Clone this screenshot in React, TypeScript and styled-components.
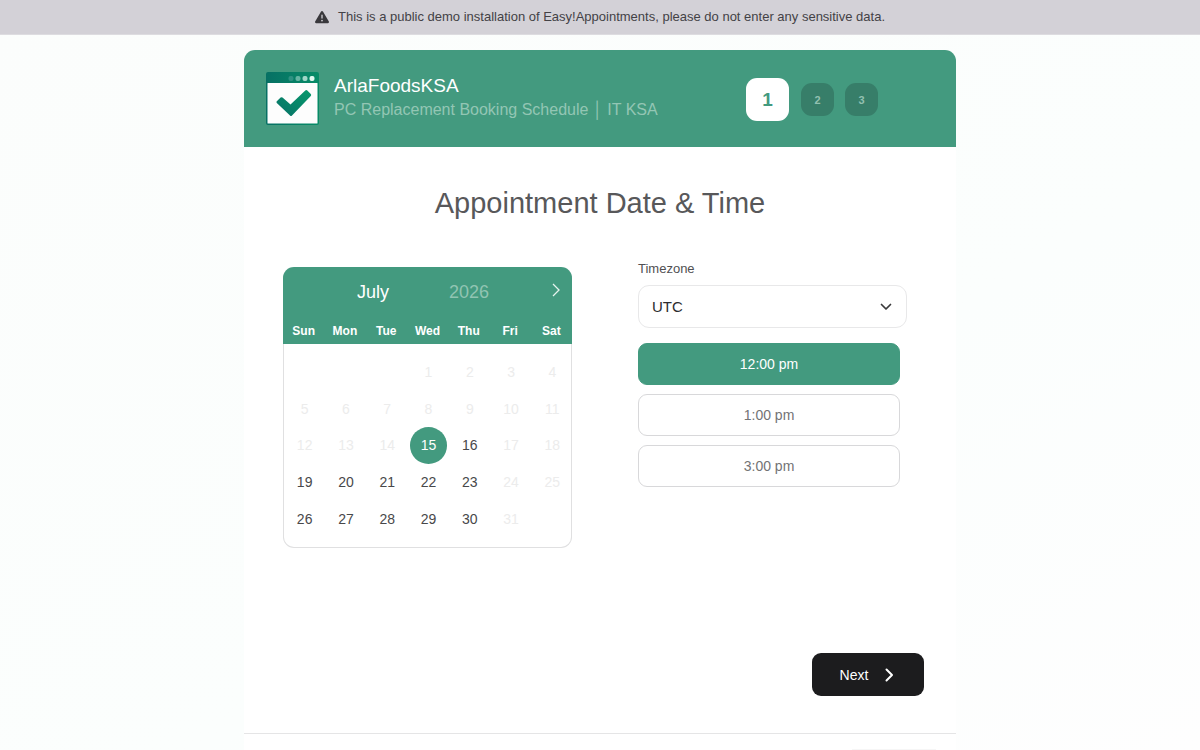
import React, { useState } from 'react';
import styled, { createGlobalStyle } from 'styled-components';

const GREEN = '#439a7f';

const GlobalStyle = createGlobalStyle`
  *, *::before, *::after { box-sizing: border-box; }
  body {
    margin: 0;
    background: #fbfefd;
    color: #58585a;
    font-family: "Liberation Sans", Arial, sans-serif;
    font-size: 13px;
    line-height: 20px;
  }
  button, select, input { font-family: inherit; }
`;

const Page = styled.div`
  min-height: 100vh;
  display: flex;
  flex-direction: column;
  align-items: center;
  background: linear-gradient(150deg, #fbfdfc 0%, #fbfefd 60%, #fefefe 100%);
`;

const Banner = styled.div`
  width: 100%;
  min-height: 35px;
  display: flex;
  align-items: center;
  justify-content: center;
  gap: 9px;
  background: #d3d1d7;
  border-bottom: 1px solid #dddce0;
  color: #434246;
`;

const Card = styled.main`
  width: 100%;
  max-width: 712px;
  flex: 1;
  margin-top: 15px;
  display: flex;
  flex-direction: column;
  background: #fff;
  border-radius: 11px 11px 0 0;
`;

const Header = styled.header`
  display: flex;
  align-items: center;
  justify-content: space-between;
  min-height: 97px;
  padding: 0 78px 0 22px;
  background: ${GREEN};
  border-radius: 11px 11px 0 0;
`;

const Brand = styled.div`
  display: flex;
  align-items: center;
  gap: 15px;
`;

const BrandText = styled.div`
  padding-bottom: 2px;
`;

const CompanyName = styled.div`
  color: #fff;
  font-size: 19px;
  line-height: 24px;
`;

const CompanyNote = styled.div`
  color: #93c6b4;
  font-size: 16px;
  line-height: 24px;
`;

const Steps = styled.div`
  display: flex;
  align-items: center;
  gap: 11px;
  padding-top: 2px;
`;

const Step = styled.div<{ $active?: boolean }>`
  width: ${p => (p.$active ? 43 : 33)}px;
  height: ${p => (p.$active ? 43 : 33)}px;
  margin-right: ${p => (p.$active ? 1 : 0)}px;
  border-radius: 11px;
  display: flex;
  align-items: center;
  justify-content: center;
  font-weight: bold;
  font-size: ${p => (p.$active ? 19 : 11)}px;
  color: ${p => (p.$active ? GREEN : '#92c0b0')};
  background: ${p => (p.$active ? '#fff' : '#377e69')};
`;

const Title = styled.h2`
  margin: 36px 0 43px;
  text-align: center;
  font-weight: normal;
  font-size: 29px;
  line-height: 40px;
  color: #58585a;
`;

const Columns = styled.div`
  display: grid;
  grid-template-columns: 1fr 1fr;
  align-items: start;
`;

const DateColumn = styled.div`
  padding: 1px 28px 0 39px;
`;

const TimeColumn = styled.div`
  padding: 0 49px 0 38px;
  display: flex;
  flex-direction: column;
`;

const Calendar = styled.div`
  border: 1px solid #e0e0e1;
  border-top: 0;
  border-radius: 11px;
`;

const CalendarHead = styled.div`
  margin: 0 -1px;
  padding-top: 9px;
  background: ${GREEN};
  border-radius: 11px 11px 0 0;
`;

const MonthRow = styled.div`
  display: grid;
  grid-template-columns: 72px 96px 1fr;
  align-items: center;
  height: 32px;
  padding: 0 10px 0 74px;
`;

const MonthSelect = styled.select`
  appearance: none;
  border: 0;
  padding: 0;
  background: transparent;
  color: #fff;
  font-size: 18px;
  line-height: 24px;
`;

const YearInput = styled.input`
  border: 0;
  padding: 0 0 0 20px;
  width: 96px;
  background: transparent;
  color: #91c4b2;
  font-size: 18px;
  line-height: 24px;
`;

const NextMonth = styled.button`
  justify-self: end;
  display: flex;
  border: 0;
  padding: 0 0 4px;
  background: transparent;
  color: #e6f3ee;
`;

const WeekRow = styled.div`
  display: grid;
  grid-template-columns: repeat(7, 1fr);
  padding: 13px 0 3px;
  text-align: center;
  color: #fff;
  font-size: 12px;
  font-weight: bold;
`;

const Days = styled.div`
  display: grid;
  grid-template-columns: repeat(7, 1fr);
  grid-template-rows: repeat(5, 1fr);
  justify-items: center;
  height: 203px;
  margin-right: -2px;
  padding: 10px 0;
`;

const Day = styled.button<{ $selected?: boolean; $first?: boolean }>`
  grid-column-start: ${p => (p.$first ? 4 : 'auto')};
  width: 37px;
  height: 100%;
  border: 0;
  border-radius: 50%;
  padding: 0;
  font-size: 14px;
  background: ${p => (p.$selected ? GREEN : 'transparent')};
  color: ${p => (p.$selected ? '#fff' : '#48484a')};
  &:disabled { color: #ececec; }
`;

const Label = styled.label`
  line-height: 18px;
  margin-top: -6px;
  color: #505052;
`;

const SelectBox = styled.div`
  position: relative;
  margin: 7px 0 15px;
  svg {
    position: absolute;
    right: 15px;
    top: 15px;
    pointer-events: none;
  }
`;

const TimezoneSelect = styled.select`
  appearance: none;
  width: 100%;
  height: 43px;
  padding: 0 13px;
  border: 1px solid #e8e8e9;
  border-radius: 11px;
  background: #fff;
  color: #2c2c2e;
  font-size: 15px;
`;

const Slots = styled.div`
  display: flex;
  flex-direction: column;
  gap: 9px;
  padding-right: 7px;
`;

const Slot = styled.button<{ $selected: boolean }>`
  height: 42px;
  border: 1px solid ${p => (p.$selected ? GREEN : '#d8d8da')};
  border-radius: 9px;
  background: ${p => (p.$selected ? GREEN : '#fff')};
  color: ${p => (p.$selected ? '#fff' : '#737375')};
  font-size: 14px;
`;

const Actions = styled.div`
  display: flex;
  justify-content: flex-end;
  margin-top: auto;
  padding: 24px 32px 37px;
`;

const NextButton = styled.button`
  display: flex;
  align-items: center;
  justify-content: center;
  gap: 14px;
  width: 112px;
  height: 43px;
  border: 0;
  border-radius: 9px;
  background: #1c1c1e;
  color: #fff;
  font-size: 14px;
`;

const Footer = styled.footer`
  display: flex;
  justify-content: flex-end;
  align-items: flex-end;
  height: 17px;
  padding-right: 20px;
  border-top: 1px solid #e5e5e6;
`;

const FooterEdge = styled.div`
  width: 84px;
  border-top: 1px solid #f6f6f6;
`;

const WarningIcon = () => (
  <svg width="14" height="14" viewBox="0 0 512 512" aria-hidden="true">
    <path
      fill="#39383c"
      d="M256 32c14.200 0 27.300 7.500 34.500 19.800l216 368c7.300 12.400 7.300 27.700.2 40.100S486.300 480 472 480H40c-14.300 0-27.600-7.700-34.700-20.100s-7-27.800.2-40.100l216-368C228.700 39.500 241.800 32 256 32zm0 128c-13.300 0-24 10.700-24 24v112c0 13.300 10.700 24 24 24s24-10.700 24-24V184c0-13.300-10.700-24-24-24zm32 224a32 32 0 1 0-64 0 32 32 0 1 0 64 0z"
    />
  </svg>
);

const Logo = () => (
  <svg width="53" height="53" viewBox="0 0 53 53" aria-hidden="true">
    <defs>
      <linearGradient id="bar" x1="0" y1="0" x2="1" y2="0">
        <stop offset="0" stopColor="#077064" />
        <stop offset="1" stopColor="#078c67" />
      </linearGradient>
      <linearGradient id="tick" x1="0" y1="1" x2="1" y2="0">
        <stop offset="0" stopColor="#087167" />
        <stop offset="1" stopColor="#07996c" />
      </linearGradient>
    </defs>
    <rect width="53" height="53" rx="2" fill="url(#bar)" />
    <rect x="1.500" y="11" width="50" height="40.500" rx="0.500" fill="#fdfdfd" />
    <rect x="22.500" y="4" width="5" height="5" rx="2" fill="#2f9182" />
    <rect x="29.500" y="4" width="5" height="5" rx="2" fill="#65b5a3" />
    <rect x="36.500" y="4" width="5" height="5" rx="2" fill="#a0d6c7" />
    <rect x="43.500" y="4" width="5" height="5" rx="2" fill="#dff8ef" />
    <path
      d="M10.800 29.200 L14.600 25.600 Q15.500 24.800 16.500 25.600 L24.500 32.500 L39.300 18.500 Q40.300 17.700 41.300 18.500 L44.800 22 Q45.600 23 44.800 24 L26 43.500 Q25 44.500 24 43.500 L10.800 31 Q10 30 10.800 29.200 Z"
      fill="url(#tick)"
    />
  </svg>
);

const WEEKDAYS = ['Sun', 'Mon', 'Tue', 'Wed', 'Thu', 'Fri', 'Sat'];
const DAYS = Array.from({ length: 31 }, (_, i) => i + 1);
const TIMES = ['12:00 pm', '1:00 pm', '3:00 pm'];
const isOpen = (d: number) => (d >= 15 && d <= 16) || (d >= 19 && d <= 23) || (d >= 26 && d <= 30);

export default function App() {
  const [day, setDay] = useState(15);
  const [time, setTime] = useState(TIMES[0]);

  return (
    <>
      <GlobalStyle />
      <Page>
        <Banner>
          <WarningIcon />
          <span>This is a public demo installation of Easy!Appointments, please do not enter any sensitive data.</span>
        </Banner>
        <Card>
          <Header>
            <Brand>
              <Logo />
              <BrandText>
                <CompanyName>ArlaFoodsKSA</CompanyName>
                <CompanyNote>PC Replacement Booking Schedule │ IT KSA</CompanyNote>
              </BrandText>
            </Brand>
            <Steps>
              <Step $active>1</Step>
              <Step>2</Step>
              <Step>3</Step>
            </Steps>
          </Header>
          <Title>Appointment Date &amp; Time</Title>
          <Columns>
            <DateColumn>
              <Calendar>
                <CalendarHead>
                  <MonthRow>
                    <MonthSelect aria-label="Month"><option>July</option></MonthSelect>
                    <YearInput aria-label="Year" defaultValue="2026" />
                    <NextMonth type="button" aria-label="Next month">
                      <svg width="12" height="14" viewBox="0 0 12 14" fill="none" stroke="currentColor" strokeWidth="1.300">
                        <path d="M3 1 L9 7 L3 13" />
                      </svg>
                    </NextMonth>
                  </MonthRow>
                  <WeekRow>
                    {WEEKDAYS.map(w => <span key={w}>{w}</span>)}
                  </WeekRow>
                </CalendarHead>
                <Days>
                  {DAYS.map(d => (
                    <Day
                      key={d}
                      type="button"
                      $first={d === 1}
                      $selected={d === day}
                      disabled={!isOpen(d)}
                      onClick={() => setDay(d)}
                    >
                      {d}
                    </Day>
                  ))}
                </Days>
              </Calendar>
            </DateColumn>
            <TimeColumn>
              <Label htmlFor="timezone">Timezone</Label>
              <SelectBox>
                <TimezoneSelect id="timezone"><option>UTC</option></TimezoneSelect>
                <svg width="12" height="14" viewBox="0 0 12 14" fill="none" stroke="#39393b" strokeWidth="1.700" strokeLinecap="round" strokeLinejoin="round">
                  <path d="M1.500 4.500 L6 9 L10.500 4.500" />
                </svg>
              </SelectBox>
              <Slots>
                {TIMES.map(t => (
                  <Slot key={t} type="button" $selected={t === time} onClick={() => setTime(t)}>{t}</Slot>
                ))}
              </Slots>
            </TimeColumn>
          </Columns>
          <Actions>
            <NextButton type="button">
              Next
              <svg width="14" height="14" viewBox="0 0 14 14" fill="none" stroke="#fff" strokeWidth="2" strokeLinecap="round" strokeLinejoin="round">
                <path d="M4.500 1.500 L10 7 L4.500 12.500" />
              </svg>
            </NextButton>
          </Actions>
          <Footer><FooterEdge /></Footer>
        </Card>
      </Page>
    </>
  );
}
